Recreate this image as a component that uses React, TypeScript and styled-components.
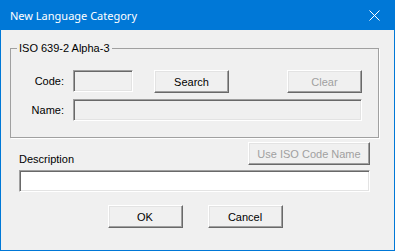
import React from 'react';
import styled, { createGlobalStyle } from 'styled-components';

const GlobalStyle = createGlobalStyle`
  html, body {
    margin: 0;
    padding: 0;
    background: #ffffff;
  }
  * {
    box-sizing: border-box;
  }
`;

const Window = styled.div`
  width: 395px;
  height: 251px;
  display: flex;
  flex-direction: column;
  border: 1px solid #0078d7;
  border-top: none;
  background: #f0f0f0;
  font-family: 'Liberation Sans', Arial, sans-serif;
  font-size: 11px;
  color: #000000;
`;

const TitleBar = styled.div`
  height: 30px;
  margin: 0 -1px;
  background: #0078d7;
  display: flex;
  align-items: center;
  justify-content: space-between;
  padding-left: 10px;
`;

const Title = styled.span`
  font-family: 'Noto Sans', 'Open Sans', sans-serif;
  font-size: 11px;
  color: #ffffff;
`;

const CloseButton = styled.div`
  width: 46px;
  height: 30px;
  display: flex;
  align-items: center;
  justify-content: center;
  padding-left: 4px;
`;

const Body = styled.div`
  flex: 1;
  display: flex;
  flex-direction: column;
  padding: 12px 15px 0 9px;
`;

const Group = styled.fieldset`
  margin: 0;
  padding: 0 16px 16px 0;
  border: 1px solid #a0a0a0;
  box-shadow: 1px 1px 0 #ffffff;
  min-width: 0;
`;

const Legend = styled.legend`
  margin-left: 6px;
  padding: 0 2px;
  line-height: 13px;
`;

const GroupRows = styled.div`
  display: flex;
  flex-direction: column;
  gap: 6px;
  padding-top: 15px;
`;

const Row = styled.div`
  display: flex;
  align-items: flex-start;
`;

const FieldLabel = styled.label`
  width: 53px;
  margin-right: 9px;
  text-align: right;
  line-height: 22px;
`;

const TextBox = styled.div<{ $width?: number; $disabled?: boolean }>`
  height: 22px;
  width: ${p => (p.$width ? `${p.$width}px` : 'auto')};
  flex: ${p => (p.$width ? '0 0 auto' : '1 1 auto')};
  border: 1px solid;
  border-color: #a0a0a0 #ffffff #ffffff #a0a0a0;
  box-shadow: inset 1px 1px 0 #696969, inset -1px -1px 0 #e3e3e3;
  background: ${p => (p.$disabled ? '#f0f0f0' : '#ffffff')};
`;

const Button = styled.button<{ $width?: number; $gap?: number }>`
  width: ${p => p.$width ?? 75}px;
  height: 23px;
  margin-left: ${p => (p.$gap === undefined ? 0 : `${p.$gap}px`)};
  padding: 0;
  border: 1px solid;
  border-color: #ffffff #696969 #696969 #ffffff;
  box-shadow: inset -1px -1px 0 #a0a0a0, inset 1px 1px 0 #e3e3e3;
  background: #f0f0f0;
  font-family: 'Liberation Sans', Arial, sans-serif;
  font-size: 11px;
  color: #000000;

  &:disabled {
    color: #a0a0a0;
  }
`;

const PushRight = styled.div`
  flex: 1;
`;

const DescSection = styled.div`
  display: flex;
  flex-direction: column;
  padding: 4px 9px 0 9px;
`;

const DescHeader = styled.div`
  display: flex;
  align-items: flex-end;
  justify-content: space-between;
  margin-bottom: 5px;
`;

const DescLabel = styled.span`
  line-height: 13px;
  margin-bottom: -1px;
`;

const Footer = styled.div`
  display: flex;
  justify-content: center;
  gap: 25px;
  padding: 13px 0 0 0;
  margin-left: 1px;
`;

export default function App() {
  return (
    <>
      <GlobalStyle />
      <Window>
        <TitleBar>
          <Title>New Language Category</Title>
          <CloseButton>
            <svg width="11" height="11" viewBox="0 0 11 11">
              <path d="M0.5 0.5 L10.5 10.5 M10.5 0.5 L0.5 10.5" stroke="#ffffff" strokeWidth="1" />
            </svg>
          </CloseButton>
        </TitleBar>
        <Body>
          <Group>
            <Legend>ISO 639-2 Alpha-3</Legend>
            <GroupRows>
              <Row>
                <FieldLabel>Code:</FieldLabel>
                <TextBox $width={60} $disabled />
                <Button $gap={21}>Search</Button>
                <PushRight />
                <Button disabled>Clear</Button>
              </Row>
              <Row>
                <FieldLabel>Name:</FieldLabel>
                <TextBox $disabled />
              </Row>
            </GroupRows>
          </Group>
          <DescSection>
            <DescHeader>
              <DescLabel>Description</DescLabel>
              <Button $width={122} disabled>Use ISO Code Name</Button>
            </DescHeader>
            <TextBox />
          </DescSection>
          <Footer>
            <Button>OK</Button>
            <Button>Cancel</Button>
          </Footer>
        </Body>
      </Window>
    </>
  );
}
